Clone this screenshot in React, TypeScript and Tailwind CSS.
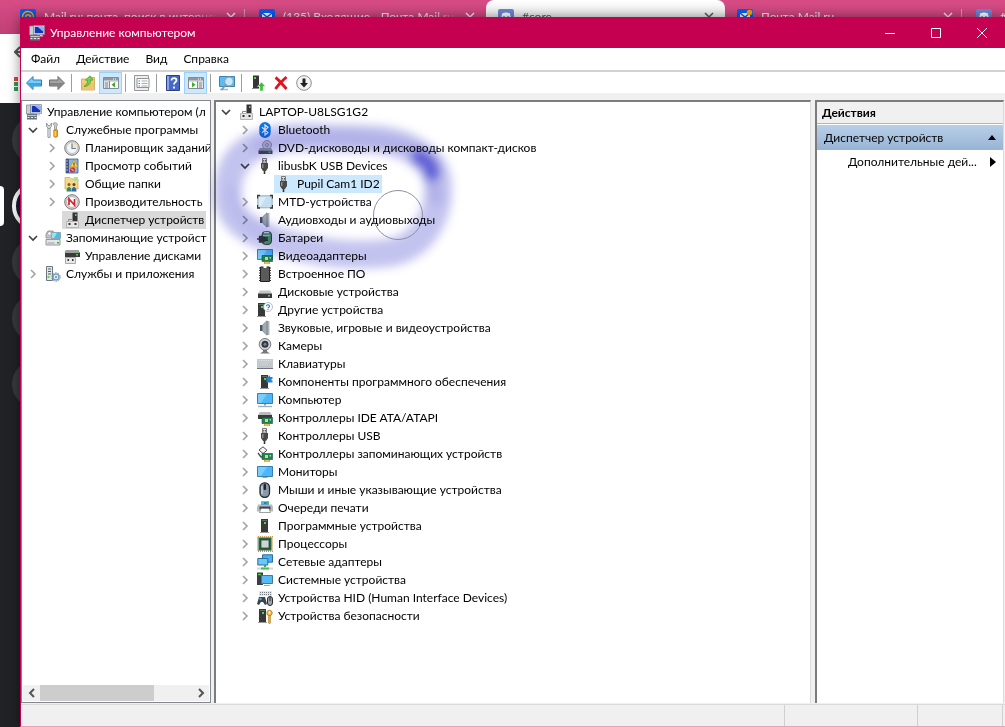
import type { ReactNode } from "react";
import clsx from "clsx";

const Svg = ({ children, size = 16 }: { children: ReactNode; size?: number }) => (
  <svg viewBox="0 0 16 16" width={size} height={size} className="shrink-0" aria-hidden="true">
    {children}
  </svg>
);

const UsbPlug = () => (
  <>
    <path d="M5.500 .5h4V5h-4z" fill="#e2e2e2" stroke="#777" />
    <path d="M6.300 2h.9v1.500h-.9zM8 2h.9v1.500H8z" fill="#444" />
    <path d="M4 5h7v5l-2 3H6l-2-3z" fill="#4a4a4a" />
    <path d="M5 6h1.500v4H5z" fill="#8c8c8c" />
    <path d="M7.500 13v3" stroke="#333" strokeWidth="1.600" />
  </>
);

const Speaker = () => (
  <>
    <path d="M3 5h2.500v6H3z" fill="#4d565f" />
    <path d="M5.500 5L10 .8v14.400L5.500 11z" fill="#a3adb6" stroke="#66717b" strokeWidth=".6" />
    <path d="M11 1v14" stroke="#77828c" strokeWidth="1.400" />
    <path d="M12.200 1v14" stroke="#ccd3d9" />
  </>
);

const Screen = () => (
  <>
    <path d="M.5 1.500h15v10H.5z" fill="#4db8f7" stroke="#3b7fae" />
    <path d="M1 2h9L4 11H1z" fill="#7accfb" />
  </>
);

const Tower = ({ x = 4 }: { x?: number }) => (
  <>
    <path d={`M${x} 1h7v13h-7z`} fill="#383838" />
    <path d={`M${x + 1} 2.500h5`} stroke="#666" />
    <path d={`M${x + 3} 4h2v2h-2z`} fill="#3fe03f" />
    <path d={`M${x - 1} 14.500h9`} stroke="#9a9a9a" />
  </>
);

const Board = () => (
  <>
    <path d="M5 7.500h10.500v6H5z" fill="#23804f" stroke="#125436" strokeWidth=".6" />
    <path d="M8 9h3v3H8zM12.500 9H14v1.500h-1.500z" fill="#a8dfbd" />
    <path d="M7 14h6v2H7z" fill="#e5a41f" />
    <path d="M9 14v2M11 14v2" stroke="#fff" strokeWidth=".5" />
  </>
);

const Console = () => (
  <>
    <path d="M.5 1h4v9h-4z" fill="#c7ced6" stroke="#76818d" strokeWidth=".7" />
    <path d="M4.500 .5h11v9h-11z" fill="#dadfe5" stroke="#7b858f" strokeWidth=".7" />
    <path d="M5.800 1.800h8.500v6.400H5.800z" fill="#1433b6" />
    <path d="M8.500 1.800h5.800v5z" fill="#8fb2f7" />
    <path d="M8 9.500h5l1.500 2H7z" fill="#c3cad1" />
    <path d="M1 10h10v5.500H1z" fill="#66717c" />
    <path d="M1.500 11.500h9" stroke="#c3c9cf" />
    <path d="M1.500 13.500h9" stroke="#eee" strokeDasharray="2 1.500" />
  </>
);

const icons = {
  console: <Console />,
  tools: (
    <>
      <path d="M4 6v8.500" stroke="#858b90" strokeWidth="3" strokeLinecap="round" />
      <path d="M4 6v8.500" stroke="#d9dde0" strokeWidth="1.600" strokeLinecap="round" />
      <path d="M1.500 1v3.500L4 7l2.500-2.500V1L5 3.500H3z" fill="#d5d9dc" stroke="#777d83" strokeWidth=".7" />
      <path d="M8 1.500C8 .5 11 .5 12 1.500L12.500 3 11.500 4v3.500h-2V4z" fill="#c9cdd1" stroke="#777" strokeWidth=".6" />
      <path d="M8.800 8h3.700v6.500l-1.800 1-1.900-1z" fill="#f3a51f" stroke="#b26d12" strokeWidth=".7" />
      <path d="M10.200 9v5" stroke="#ffe08b" />
    </>
  ),
  clock: (
    <>
      <circle cx="8" cy="8" r="7.300" fill="#d8d8d8" stroke="#7f7f7f" />
      <circle cx="8" cy="8" r="5.500" fill="#f4f7fa" stroke="#a2a8ae" strokeWidth=".6" />
      <path d="M8 8V2.500A5.500 5.500 0 0 1 13.500 8z" fill="#f8e3b6" />
      <path d="M8 3.500V8.500h4" fill="none" stroke="#6680a0" strokeWidth="1.200" />
    </>
  ),
  events: (
    <>
      <path d="M2 1h12v14H2z" fill="#8fb0de" stroke="#3f5c8a" strokeWidth=".8" />
      <path d="M2 1h3v14H2z" fill="#3e568b" />
      <path d="M1 3h3M1 6h3M1 9h3M1 12h3" stroke="#bbb" strokeWidth=".9" />
      <path d="M10 2l4 7H6z" fill="#f9d741" stroke="#b18d12" strokeWidth=".5" />
      <path d="M10 4.500v2.500M10 7.500v1" stroke="#333" />
      <circle cx="8.500" cy="12" r="2.600" fill="#cf3342" />
      <path d="M7.300 10.800l2.400 2.400" stroke="#fff" strokeWidth=".9" />
    </>
  ),
  shared: (
    <>
      <path d="M1 3V1.500h5L7.500 3H14v10H1z" fill="#f5d98a" stroke="#c5a354" strokeWidth=".7" />
      <path d="M10 1h4v4h-4z" fill="#b7dd94" />
      <circle cx="5" cy="8.500" r="1.500" fill="#8b5a34" />
      <circle cx="10" cy="8.500" r="1.500" fill="#5a4632" />
      <path d="M2.500 15.500c0-6 5-6 5 0z" fill="#2e8b6f" />
      <path d="M7.500 15.500c0-6 5-6 5 0z" fill="#2f66b6" />
    </>
  ),
  perf: (
    <>
      <circle cx="8" cy="8" r="7.300" fill="#d6d6d6" stroke="#777" />
      <circle cx="8" cy="8" r="5.300" fill="#fff" stroke="#999" strokeWidth=".6" />
      <path d="M5 11V5l5.500 6V5" fill="none" stroke="#d5202a" strokeWidth="1.700" />
    </>
  ),
  devices: (
    <>
      <path d="M8.500 .5h5V9h-5z" fill="#333" />
      <path d="M11 2h1.500v2H11z" fill="#4cd84c" />
      <path d="M2.500 9.500h12v6h-12z" fill="#e6e6e6" stroke="#b5b5b5" />
      <path d="M4.500 9V7.500h4V9" fill="none" stroke="#8b8b8b" />
      <path d="M4.500 11h2v2h-2zM10.500 11h2v2h-2z" fill="#333" />
    </>
  ),
  storage: (
    <>
      <path d="M1 4l2-3h5l2 3v4H1z" fill="#c5cad0" stroke="#727980" strokeWidth=".7" />
      <circle cx="4.500" cy="3.500" r="1.800" fill="#fff" stroke="#888" strokeWidth=".6" />
      <path d="M6.500 2.500h9v6h-9z" fill="#3fc1e8" stroke="#8fa6b4" />
      <path d="M7 3h5l-3 5H7z" fill="#9ae2f7" />
      <path d="M1 9.500h14V15H1z" fill="#e4e7e9" stroke="#7b8288" strokeWidth=".8" />
      <path d="M2.500 13h7" stroke="#999" />
      <path d="M12 12h2v1.500h-2z" fill="#35b435" />
    </>
  ),
  diskMgmt: (
    <>
      <path d="M2 2h12l2 3v4H1V5z" fill="#3b3b3b" />
      <path d="M2 2h12l1.500 3h-15z" fill="#a0a0a0" />
      <path d="M12 6h2v1.500h-2z" fill="#45dc45" />
      <path d="M1.500 9.500h10v6h-10z" fill="#e8e8e8" stroke="#aaa" />
      <path d="M3.500 11h1.500v2H3.500zM8 11h1.500v2H8z" fill="#333" />
    </>
  ),
  services: (
    <>
      <path d="M1.500 .5h6v14h-6z" fill="#e2e7eb" stroke="#6d7780" />
      <path d="M3 3h3M3 5.500h3M3 8h3" stroke="#4f5c66" />
      <path d="M2.500 10h2v2h-2z" fill="#6dcc38" />
      <circle cx="11" cy="11" r="3" fill="#e8f1f8" stroke="#7ba1c0" strokeWidth="1.500" />
      <circle cx="11" cy="11" r="4.300" fill="none" stroke="#6e97b8" strokeDasharray="1.400 1.300" />
      <circle cx="11" cy="11" r="1" fill="#5e83a1" />
    </>
  ),
  bluetooth: (
    <>
      <rect x="2.300" y="0" width="11.400" height="16" rx="5.600" fill="#0b7fe8" />
      <path d="M5 5.200l6 5.400L8 13V3l3 2.400-6 5.400" fill="none" stroke="#fff" strokeWidth="1.200" />
    </>
  ),
  dvd: (
    <>
      <circle cx="10" cy="5" r="4.500" fill="#dcdce0" stroke="#93969e" strokeWidth=".8" />
      <circle cx="10" cy="5" r="1.400" fill="#fff" stroke="#777" strokeWidth=".7" />
      <path d="M3 8h11l1.500 2.500H1.500z" fill="#a3a7ae" />
      <path d="M1.500 10.500h14V14h-14z" fill="#4c5058" />
      <path d="M11.500 11.500h2V13h-2z" fill="#45c17d" />
    </>
  ),
  usb: <UsbPlug />,
  mtd: (
    <>
      <rect x=".8" y="1.800" width="14.400" height="12" rx="1" fill="#c5dff0" stroke="#8f9ba5" strokeWidth=".8" />
      <path d="M2 3h7l-5 9H2z" fill="#dcecf6" />
      <path d="M.5 4.500v-3H3M13 1.500h2.500v3M15.500 11v3H13M3 14H.5v-3" fill="none" stroke="#333b42" strokeWidth="1.300" />
    </>
  ),
  speaker: <Speaker />,
  battery: (
    <>
      <rect x="5" y="1.500" width="9.500" height="13" rx="3.500" fill="#5aa872" stroke="#26573b" />
      <path d="M7 2.500h5" stroke="#e2f3e6" strokeWidth="1.500" />
      <path d="M6 5.500h7" stroke="#b2dbbf" />
      <path d="M0 9h3M5 6.500H2.500v5.500H6l4-2.800z" fill="#3a3f49" stroke="#3a3f49" strokeWidth="1.300" />
      <path d="M7 7.800h4M7 10.500h4" stroke="#30343c" strokeWidth="1.200" />
    </>
  ),
  video: (
    <>
      <Screen />
      <Board />
    </>
  ),
  firmware: (
    <>
      <path d="M2 2h2.500M2 4.500h12M2 7h12M2 9.500h12M2 12h12M2 14.500h12M11.500 2H14" stroke="#333" strokeWidth="1.200" />
      <path d="M3.500 1h9v14.500h-9z" fill="#5a5a5a" stroke="#222" />
      <path d="M6.500 0h3v2h-3z" fill="#fff" />
    </>
  ),
  disk: (
    <>
      <path d="M3 6.500h10l2 3H1z" fill="#c4c4c4" />
      <path d="M1 9.500h14V14H1z" fill="#383838" />
      <path d="M11 11h2v1.500h-2z" fill="#47df47" />
    </>
  ),
  unknown: (
    <>
      <Tower x={1} />
      <circle cx="11" cy="5" r="4.500" fill="#fff" stroke="#a4adb5" strokeWidth=".8" />
      <path d="M9.500 4.200c0-2 3-2 3 0 0 1-1.500 1-1.500 2.100M11 7v1" fill="none" stroke="#1c79c9" strokeWidth="1.100" />
    </>
  ),
  camera: (
    <>
      <circle cx="8" cy="6.300" r="5.800" fill="#d4d4d4" stroke="#777" />
      <circle cx="8" cy="6.300" r="3.500" fill="#31383f" />
      <circle cx="8" cy="6.300" r="1.500" fill="#628ab0" />
      <path d="M6 12h4v1.500l3 2H3l3-2z" fill="#777" />
    </>
  ),
  keyboard: (
    <>
      <path d="M0 3h16v9H0z" fill="#c3c8cd" />
      <path d="M0 12.500h16" stroke="#6e747a" />
      <path d="M2 5h12M2 7h12M3.500 9h9" stroke="#fff" strokeDasharray="1.200 1" />
      <path d="M2 6h12M2 8h12M3.500 10h9" stroke="#9fa5ab" strokeWidth=".8" strokeDasharray="1.200 1" />
    </>
  ),
  software: (
    <>
      <Tower x={4} />
      <path d="M9.500 3h2c-.5-2 2-2 1.500 0h2.500v2c-1.500-.5-1.500 2 0 1.500V8.500h-6z" fill="#2183cf" />
    </>
  ),
  computer: (
    <>
      <Screen />
      <path d="M7 12h2v1.500H7z" fill="#8ea4b4" />
      <path d="M1 14.500h14" stroke="#9db1bf" strokeWidth="1.400" />
    </>
  ),
  ide: (
    <>
      <path d="M3 2h10l2 3H1z" fill="#bbb" />
      <path d="M1 5h14v4H1z" fill="#3a3a3a" />
      <Board />
    </>
  ),
  storageCtl: (
    <>
      <path d="M6 .8l4 3.500-4 3.200-4-3.500z" fill="#f6f6f6" stroke="#4d4d4d" />
      <path d="M1 7l3 4h3" fill="none" stroke="#4d4d4d" strokeWidth="1.300" />
      <Board />
    </>
  ),
  monitor: (
    <>
      <path d="M.5 2.500h15v10H.5z" fill="#4db8f7" stroke="#3b7fae" />
      <path d="M1 3h9l-6 9H1z" fill="#7accfb" />
      <path d="M5.500 13.500h5" stroke="#8ea4b4" />
    </>
  ),
  mouse: (
    <>
      <rect x="3" y=".8" width="9.500" height="14.500" rx="4.500" fill="#8a98a7" stroke="#22272c" strokeWidth="1.300" />
      <path d="M5 4v8" stroke="#cfdae3" strokeWidth="1.300" />
      <rect x="6.600" y="2" width="2.400" height="6" rx="1" fill="#20252a" />
    </>
  ),
  printer: (
    <>
      <path d="M4 1.500h8V6H4z" fill="#1f7fe0" />
      <path d="M4 1.500h3V4H4z" fill="#38c8d8" />
      <path d="M9.500 1.500H12V4H9.500z" fill="#4bc247" />
      <path d="M1 4.500h14l1 3v4H0v-4z" fill="#b5bbc1" />
      <path d="M2.500 6.500h11v3h-11z" fill="#41474d" />
      <path d="M4 8.500h8l1.500 4h-11z" fill="#fff" stroke="#777" strokeWidth=".7" />
    </>
  ),
  tower: <Tower x={4} />,
  cpu: (
    <>
      <path d="M.8 .8h14.400v14.400H.8z" fill="#fff" stroke="#bd9334" strokeWidth="1.500" strokeDasharray="1 1" />
      <path d="M1.500 1.500h13v13h-13z" fill="#2a6248" />
      <path d="M4 4h8v8H4z" fill="#ced6d2" stroke="#133c2a" strokeWidth=".7" />
    </>
  ),
  network: (
    <>
      <path d="M5.500 .8h10v7.400h-10z" fill="#49b2f3" stroke="#2c6d9c" />
      <path d="M.8 4.500h10V11h-10z" fill="#69c7fa" stroke="#2c6d9c" />
      <path d="M7 11h2v2H7z" fill="#37a85a" />
      <path d="M0 14.500h16" stroke="#d5d5d5" strokeWidth="2" />
      <path d="M4 13.500h8v2H4z" fill="#48bf56" />
    </>
  ),
  system: (
    <>
      <path d="M0 .5h6V13H0z" fill="#3b3f43" />
      <path d="M1 2.500h3" stroke="#45da45" strokeWidth="1.300" />
      <path d="M4.500 3.500h11v8h-11z" fill="#55bbf6" stroke="#41789d" />
      <path d="M7 13.500h6" stroke="#98a8b4" />
    </>
  ),
  hid: (
    <>
      <path d="M2 1h13v5H2z" fill="#e3e6e8" />
      <path d="M3 2.500h11M3 4.500h11" stroke="#777f86" strokeDasharray="1 1" />
      <path d="M0 14l2-7h6l2 7-2 1-2-3H4l-2 3z" fill="#3a444d" />
      <circle cx="3.500" cy="9" r="1.200" fill="#58a6e0" />
      <rect x="10.500" y="6.500" width="5" height="9" rx="2.500" fill="#9aa3ac" stroke="#262b30" />
      <path d="M13 7v4" stroke="#262b30" />
    </>
  ),
  security: (
    <>
      <Tower x={2} />
      <circle cx="12.500" cy="5" r="2.700" fill="#f0c04e" stroke="#ab751c" strokeWidth=".8" />
      <circle cx="12.500" cy="4.500" r=".9" fill="#fff" />
      <path d="M11.500 7.500h2V15l-1 1-1-1z" fill="#e6ad36" stroke="#ab751c" strokeWidth=".5" />
    </>
  ),
};

type IconName = keyof typeof icons;

interface Node {
  label: string;
  icon: IconName;
  level: number;
  open?: boolean;
  leaf?: boolean;
  selected?: boolean;
}

const consoleTree: Node[] = [
  { label: "Управление компьютером (л", icon: "console", level: 0, leaf: true },
  { label: "Служебные программы", icon: "tools", level: 1, open: true },
  { label: "Планировщик заданий", icon: "clock", level: 2 },
  { label: "Просмотр событий", icon: "events", level: 2 },
  { label: "Общие папки", icon: "shared", level: 2 },
  { label: "Производительность", icon: "perf", level: 2 },
  { label: "Диспетчер устройств", icon: "devices", level: 2, leaf: true, selected: true },
  { label: "Запоминающие устройст", icon: "storage", level: 1, open: true },
  { label: "Управление дисками", icon: "diskMgmt", level: 2, leaf: true },
  { label: "Службы и приложения", icon: "services", level: 1 },
];

const deviceTree: Node[] = [
  { label: "LAPTOP-U8LSG1G2", icon: "devices", level: 0, open: true },
  { label: "Bluetooth", icon: "bluetooth", level: 1 },
  { label: "DVD-дисководы и дисководы компакт-дисков", icon: "dvd", level: 1 },
  { label: "libusbK USB Devices", icon: "usb", level: 1, open: true },
  { label: "Pupil Cam1 ID2", icon: "usb", level: 2, leaf: true, selected: true },
  { label: "MTD-устройства", icon: "mtd", level: 1 },
  { label: "Аудиовходы и аудиовыходы", icon: "speaker", level: 1 },
  { label: "Батареи", icon: "battery", level: 1 },
  { label: "Видеоадаптеры", icon: "video", level: 1 },
  { label: "Встроенное ПО", icon: "firmware", level: 1 },
  { label: "Дисковые устройства", icon: "disk", level: 1 },
  { label: "Другие устройства", icon: "unknown", level: 1 },
  { label: "Звуковые, игровые и видеоустройства", icon: "speaker", level: 1 },
  { label: "Камеры", icon: "camera", level: 1 },
  { label: "Клавиатуры", icon: "keyboard", level: 1 },
  { label: "Компоненты программного обеспечения", icon: "software", level: 1 },
  { label: "Компьютер", icon: "computer", level: 1 },
  { label: "Контроллеры IDE ATA/ATAPI", icon: "ide", level: 1 },
  { label: "Контроллеры USB", icon: "usb", level: 1 },
  { label: "Контроллеры запоминающих устройств", icon: "storageCtl", level: 1 },
  { label: "Мониторы", icon: "monitor", level: 1 },
  { label: "Мыши и иные указывающие устройства", icon: "mouse", level: 1 },
  { label: "Очереди печати", icon: "printer", level: 1 },
  { label: "Программные устройства", icon: "tower", level: 1 },
  { label: "Процессоры", icon: "cpu", level: 1 },
  { label: "Сетевые адаптеры", icon: "network", level: 1 },
  { label: "Системные устройства", icon: "system", level: 1 },
  { label: "Устройства HID (Human Interface Devices)", icon: "hid", level: 1 },
  { label: "Устройства безопасности", icon: "security", level: 1 },
];

const Chevron = ({ open }: { open?: boolean }) => (
  <svg viewBox="0 0 10 10" width="10" height="10" fill="none" strokeWidth="1.600" aria-hidden="true">
    {open ? <path d="M1 3l4 4 4-4" stroke="#404040" /> : <path d="M3 1l4 4-4 4" stroke="#a3a3a3" />}
  </svg>
);

const TreeRow = ({ node, indents, selectedClass }: { node: Node; indents: string[]; selectedClass: string }) => (
  <li className={clsx("flex h-[18px] items-center", indents[node.level])}>
    {node.leaf ? (
      <span className="w-4 shrink-0" />
    ) : (
      <button className="flex w-4 shrink-0 items-center pl-px" aria-label={node.label}>
        <Chevron open={node.open} />
      </button>
    )}
    <span className={clsx("flex h-full items-center gap-[5px] px-0.5", node.selected && selectedClass)}>
      <Svg>{icons[node.icon]}</Svg>
      <span>{node.label}</span>
    </span>
  </li>
);

/* ---------- browser behind the window ---------- */

const MailIcon = ({ dot }: { dot?: boolean }) => (
  <Svg>
    <rect width="16" height="16" rx="2" fill="#0a5df0" />
    <path d="M3 4h10v8H3z" fill="#fff" />
    <path d="M3 4l5 4 5-4" fill="none" stroke="#0a5df0" strokeWidth="1.500" />
    {dot && <circle cx="12.500" cy="3.500" r="2.800" fill="#f0a51c" />}
  </Svg>
);

const AtIcon = () => (
  <Svg>
    <rect width="16" height="16" rx="2" fill="#0a5df0" />
    <circle cx="8" cy="8" r="2.300" fill="none" stroke="#f5a81e" strokeWidth="1.500" />
    <path d="M10.500 6v3c0 2 3 2 3-1A5.500 5.500 0 1 0 11 12.500" fill="none" stroke="#f5a81e" strokeWidth="1.500" />
  </Svg>
);

const DiscordIcon = () => (
  <Svg>
    <rect width="16" height="16" rx="2" fill="#6f86d6" />
    <path d="M4 4.500c3-1.500 5-1.500 8 0l1 6c-2 2-3 1.500-3 1.500H6s-1 .5-3-1.500z" fill="#fff" />
    <path d="M6 7v2M10 7v2" stroke="#6f86d6" strokeWidth="1.500" />
  </Svg>
);

const tabs: { title: string; icon: ReactNode; active?: boolean; line?: boolean }[] = [
  { title: "Mail.ru: почта, поиск в интернет", icon: <AtIcon />, line: true },
  { title: "(135) Входящие - Почта Mail.ru", icon: <MailIcon /> },
  { title: "#core", icon: <DiscordIcon />, active: true },
  { title: "Почта Mail.ru", icon: <MailIcon dot />, line: true },
  { title: "#", icon: <DiscordIcon /> },
];

const Browser = () => (
  <div className="flex h-full flex-col bg-[#202225]">
    <div className="flex h-[34px] shrink-0 overflow-hidden bg-linear-to-b from-[#d84c86] to-[#c04076] pl-2 text-[#f7e3ec]">
      {tabs.map((tab) => (
        <div
          key={tab.title}
          className={clsx(
            "flex w-[239px] shrink-0 items-center gap-2 pl-3",
            tab.active && "rounded-t-lg bg-linear-to-b from-white to-[#dcdcdc] text-[#555]",
          )}
        >
          {tab.icon}
          <span className="w-[174px] shrink-0 overflow-hidden whitespace-nowrap mask-r-from-85%">{tab.title}</span>
          <svg viewBox="0 0 10 10" width="10" height="10" stroke="currentColor" strokeWidth="1.500" aria-hidden="true">
            <path d="M1 1l8 8M9 1L1 9" />
          </svg>
          {tab.line && <span className="h-4 w-px bg-[#e58db3]" />}
        </div>
      ))}
    </div>
    <div className="flex h-[69px] shrink-0 flex-col justify-between bg-linear-to-r from-white from-40% to-[#d8d8d8] to-[22px] py-3 pl-3.5">
      <svg viewBox="0 0 12 12" width="12" height="12" fill="none" stroke="#555" strokeWidth="2" aria-hidden="true">
        <path d="M6 1L1 6l5 5M1 6h11" />
      </svg>
      <svg viewBox="0 0 4 14" width="4" height="14" aria-hidden="true">
        <path d="M0 0h4v4H0z" fill="#e0453a" />
        <path d="M0 5h4v4H0zM0 10h4v4H0z" fill="#2f9e58" />
      </svg>
    </div>
    <div className="flex flex-1 flex-col pt-[13px] pl-3">
      <span className="size-12 shrink-0 rounded-full bg-[#36393f]" />
      <span className="mt-[18px] size-12 shrink-0 rounded-full border-4 border-white bg-[#171a35]" />
      <span className="mt-2 size-12 shrink-0 rounded-full bg-[#36393f]" />
      <span className="mt-2 size-12 shrink-0 rounded-full bg-[#36393f]" />
      <span className="mt-[18px] size-12 shrink-0 rounded-full bg-[#36393f]" />
    </div>
    <span className="absolute top-[186px] left-0 h-10 w-1 rounded-r bg-white" />
  </div>
);

/* ---------- toolbar ---------- */

const PaneIcon = ({ flip }: { flip?: boolean }) => (
  <Svg>
    <path d="M.5 2.500h15v11H.5z" fill="#fff" stroke="#858c93" />
    <path d="M1 3h14v2.500H1z" fill="#8f989f" />
    <path d="M1 6h14" stroke="#b5bbc0" />
    <path d="M10 4h4" stroke="#fff" strokeDasharray="1 1" />
    {flip ? (
      <>
        <path d="M10 7h5v6h-5z" fill="#dfe3e6" />
        <path d="M9.500 6v7" stroke="#858c93" />
        <path d="M11 8h3M11 10h3M11 12h3" stroke="#7d8a95" />
        <path d="M4 7l3.500 2.800L4 12.500z" fill="#38ad2c" />
      </>
    ) : (
      <>
        <path d="M1 7h5v6H1z" fill="#dfe3e6" />
        <path d="M6.500 6v7" stroke="#858c93" />
        <path d="M2 8h3M2 10h3M2 12h3" stroke="#7d8a95" />
        <path d="M12 7L8.500 9.800l3.500 2.700z" fill="#38ad2c" />
      </>
    )}
  </Svg>
);

const ToolButton = ({ label, pressed, children }: { label: string; pressed?: boolean; children: ReactNode }) => (
  <button
    aria-label={label}
    className={clsx(
      "flex h-[22px] w-[23px] shrink-0 items-center justify-center",
      pressed && "border border-[#99d1ff] bg-[#cce8ff]",
    )}
  >
    {children}
  </button>
);

const Separator = () => <span className="mr-1 ml-[3px] h-[18px] w-px shrink-0 bg-[#9d9d9d]" />;

const Arrow = ({ fill, shade, stroke, flip }: { fill: string; shade: string; stroke: string; flip?: boolean }) => (
  <Svg>
    <path
      d={flip ? "M15.500 8L9 1.500v3.500H.5v6H9v3.500z" : "M.5 8L7 1.500v3.500h8.500v6H7v3.500z"}
      fill={fill}
      stroke={stroke}
      strokeLinejoin="round"
    />
    <path d={flip ? "M1 8h14L9.500 13.500v-3H1z" : "M15 8H1l5.500 5.500v-3H15z"} fill={shade} />
  </Svg>
);

const Toolbar = () => (
  <div className="flex h-[21px] shrink-0 items-center bg-white pl-px">
    <ToolButton label="Назад">
      <Arrow fill="#79cdf5" shade="#3ba4e3" stroke="#2680bd" />
    </ToolButton>
    <ToolButton label="Вперёд">
      <Arrow fill="#a3a3a3" shade="#838383" stroke="#6b6b6b" flip />
    </ToolButton>
    <Separator />
    <ToolButton label="Вверх">
      <Svg>
        <path d="M1.500 15V4h8l1-1.500h4V15z" fill="#f0cd7c" stroke="#c9a553" strokeWidth=".8" />
        <path d="M2 8h12v6.500H2z" fill="#eec56b" />
        <path d="M4 11.500C6.500 10 7.500 8 7.700 5.500L5.500 5 10 .8 13 5l-2.300.3C10.500 9 8 11.500 4 11.500z" fill="#6fd14e" stroke="#2f8f22" strokeWidth=".6" />
      </Svg>
    </ToolButton>
    <ToolButton label="Дерево консоли" pressed>
      <PaneIcon />
    </ToolButton>
    <Separator />
    <ToolButton label="Свойства">
      <Svg>
        <path d="M.5 .5h14v15H.5z" fill="#eee" stroke="#999" />
        <path d="M3 3.500h12v9H3z" fill="#fff" stroke="#8b949b" />
        <path d="M4.500 6H6M4.500 8.500H6M4.500 11H6" stroke="#4c82ba" />
        <path d="M7.500 6h6M7.500 8.500h6M7.500 11h6" stroke="#a5abb0" />
      </Svg>
    </ToolButton>
    <Separator />
    <ToolButton label="Справка">
      <Svg>
        <path d="M1.500 .5h13v15h-13z" fill="#4468c9" stroke="#2b3e88" />
        <path d="M2 1h2v14H2z" fill="#8fa6df" />
        <path d="M6.500 5.500c0-3.500 5.500-3 5 0-.3 1.700-2.500 1.800-2.500 4M9 11.500v2" fill="none" stroke="#fff" strokeWidth="1.800" />
      </Svg>
    </ToolButton>
    <ToolButton label="Панель действий" pressed>
      <PaneIcon flip />
    </ToolButton>
    <Separator />
    <ToolButton label="Обновить конфигурацию">
      <Svg>
        <path d="M.5 1.500h15v10H.5z" fill="#5cbcf1" stroke="#3a82b1" />
        <path d="M1 14.500h8" stroke="#a9b8c3" strokeWidth="1.500" />
        <circle cx="10" cy="6.500" r="4.300" fill="#c5e9fb" stroke="#8fa9ba" strokeWidth="1.200" />
        <path d="M7 9.500L2.500 15" stroke="#8298a6" strokeWidth="1.800" />
      </Svg>
    </ToolButton>
    <Separator />
    <ToolButton label="Обновить драйвер">
      <Svg>
        <path d="M3 .5h6V13H3z" fill="#363636" />
        <path d="M4 2h2v2H4z" fill="#48dc48" />
        <path d="M2 13.500h7" stroke="#888" />
        <path d="M11.500 7l4 4.500h-2.300V16h-3.400v-4.500H7.500z" fill="#3cbf3c" stroke="#fff" strokeWidth=".5" />
      </Svg>
    </ToolButton>
    <ToolButton label="Удалить устройство">
      <Svg>
        <path d="M2.500 2.500C6 5 10 10 13.500 14M13.500 2C9 6 5 10 2.500 14" fill="none" stroke="#dc1420" strokeWidth="2.800" />
      </Svg>
    </ToolButton>
    <ToolButton label="Отключить устройство">
      <Svg>
        <circle cx="8" cy="8" r="7.300" fill="#f5f5f5" stroke="#8c8c8c" />
        <path d="M6.500 3.500h3V8H12l-4 4.500L4 8h2.500z" fill="#222" />
      </Svg>
    </ToolButton>
  </div>
);

/* ---------- panes ---------- */

const ConsolePane = () => (
  <nav className="mr-[3px] flex w-[190px] shrink-0 flex-col overflow-hidden border border-[#828790] bg-white">
    <ul className="flex-1 overflow-hidden pt-0.5 whitespace-nowrap">
      {consoleTree.map((node) => (
        <TreeRow
          key={node.label}
          node={node}
          indents={["-ml-[14px]", "pl-[5px]", "pl-6"]}
          selectedClass="bg-[#d9d9d9]"
        />
      ))}
    </ul>
    <div className="m-px flex h-4 shrink-0 bg-[#f0f0f0]">
      <button className="flex w-[17px] items-center justify-center" aria-label="Влево">
        <svg viewBox="0 0 10 10" width="10" height="10" fill="none" stroke="#555" strokeWidth="2" aria-hidden="true">
          <path d="M7 1L3 5l4 4" />
        </svg>
      </button>
      <div className="flex-1">
        <div className="h-full w-3/4 bg-[#cdcdcd]" />
      </div>
      <button className="flex w-[17px] items-center justify-center" aria-label="Вправо">
        <svg viewBox="0 0 10 10" width="10" height="10" fill="none" stroke="#555" strokeWidth="2" aria-hidden="true">
          <path d="M3 1l4 4-4 4" />
        </svg>
      </button>
    </div>
  </nav>
);

// Brush stroke and round cursor drawn over the selected device
const Marker = () => (
  <svg
    viewBox="0 0 260 180"
    width="260"
    height="180"
    className="pointer-events-none absolute -top-0.5 -left-2 mix-blend-multiply"
    fill="none"
    aria-hidden="true"
  >
    <defs>
      <filter id="soft" x="-20%" y="-20%" width="140%" height="140%">
        <feGaussianBlur stdDeviation="5" />
      </filter>
    </defs>
    <g filter="url(#soft)" strokeLinecap="round" strokeLinejoin="round">
      <path
        d="M216 58C195 38 165 38 120 38 70 34 28 42 21 80c-6 30 8 46 39 58 40 15 90 20 125 14 30-7 47-37 45-67-1-13-6-21-14-27"
        stroke="#c3c3ef"
        strokeWidth="28"
      />
      <path d="M50 47c40-14 90-10 130-5 22 3 38 12 44 30l4 26" stroke="#b0b0e8" strokeWidth="14" />
      <path d="M24 90c0 20 10 34 36 44" stroke="#b8b8ec" strokeWidth="10" />
      <path d="M211 57c9 4 13 10 13 16" stroke="#6161d6" strokeWidth="17" />
    </g>
    <circle cx="190" cy="115" r="24.500" stroke="#8d8da3" />
  </svg>
);

const DevicePane = () => (
  <main className="relative min-w-0 flex-1 border-t-2 border-r border-l-2 border-t-[#7c7c7c] border-r-[#dcdcdc] border-l-[#7c7c7c] bg-white">
    <ul className="pt-px whitespace-nowrap">
      {deviceTree.map((node) => (
        <TreeRow
          key={node.label}
          node={node}
          indents={["pl-1", "pl-[23px]", "pl-[42px]"]}
          selectedClass="bg-[#cce8ff]"
        />
      ))}
    </ul>
    <Marker />
  </main>
);

const ActionsPane = () => (
  <aside className="ml-1 w-[189px] shrink-0 border-t-2 border-r border-l-2 border-t-[#7c7c7c] border-r-[#dcdcdc] border-l-[#7c7c7c] bg-white">
    <h2 className="flex h-[22px] items-center border-b border-[#b5b5b5] bg-[#f0f0f0] pl-[5px] font-bold">Действия</h2>
    <button className="mt-px flex h-[25px] w-full items-center justify-between bg-linear-to-b from-[#b8cfe8] to-[#98b4d4] pr-[7px] pl-[7px]">
      Диспетчер устройств
      <svg viewBox="0 0 8 5" width="8" height="5" aria-hidden="true">
        <path d="M4 0l4 5H0z" />
      </svg>
    </button>
    <button className="flex h-6 w-full items-center justify-between pr-[7px] pl-[31px]">
      Дополнительные дей...
      <svg viewBox="0 0 6 10" width="6" height="10" aria-hidden="true">
        <path d="M0 0l6 5-6 5z" />
      </svg>
    </button>
  </aside>
);

const CaptionButton = ({ label, children }: { label: string; children: ReactNode }) => (
  <button className="flex h-full w-[46px] items-center justify-center" aria-label={label}>
    <svg viewBox="0 0 10 10" width="10" height="10" fill="none" stroke="#fff" aria-hidden="true">
      {children}
    </svg>
  </button>
);

export default function App() {
  return (
    <div className="relative h-screen overflow-hidden font-['Lato','Open_Sans',sans-serif] text-xs leading-[18px] text-black">
      <Browser />

      <div className="absolute top-[17px] right-0 bottom-0 left-5 flex flex-col border-b border-l border-b-[#e3a4bf] border-l-[#c50050] bg-[#f0f0f0] shadow-[0_0_12px_rgba(0,0,0,0.45)]">
        <header className="flex h-[31px] shrink-0 items-center bg-[#c50050] pl-2 text-white">
          <Svg>{icons.console}</Svg>
          <h1 className="ml-[5px] flex-1">Управление компьютером</h1>
          <CaptionButton label="Свернуть">
            <path d="M0 5.500h10" />
          </CaptionButton>
          <CaptionButton label="Развернуть">
            <path d="M.5 .5h9v9h-9z" />
          </CaptionButton>
          <CaptionButton label="Закрыть">
            <path d="M0 0l10 10M10 0L0 10" />
          </CaptionButton>
        </header>

        <div className="flex h-6 shrink-0 items-center gap-4 border-b-2 border-[#d2d2d2] bg-white pl-2.5">
          <button>Файл</button>
          <button>Действие</button>
          <button>Вид</button>
          <button>Справка</button>
        </div>

        <Toolbar />

        <div className="flex min-h-0 flex-1 pt-[7px] pr-px pb-px">
          <ConsolePane />
          <DevicePane />
          <ActionsPane />
        </div>

        <footer className="flex h-[22px] shrink-0 border-t border-[#d9d9d9] pr-0.5">
          <span className="flex-1 border-r border-[#d0d0d0]" />
          <span className="w-[133px] border-r border-[#d0d0d0]" />
          <span className="w-[85px] border-r border-[#d0d0d0]" />
        </footer>
      </div>
    </div>
  );
}
